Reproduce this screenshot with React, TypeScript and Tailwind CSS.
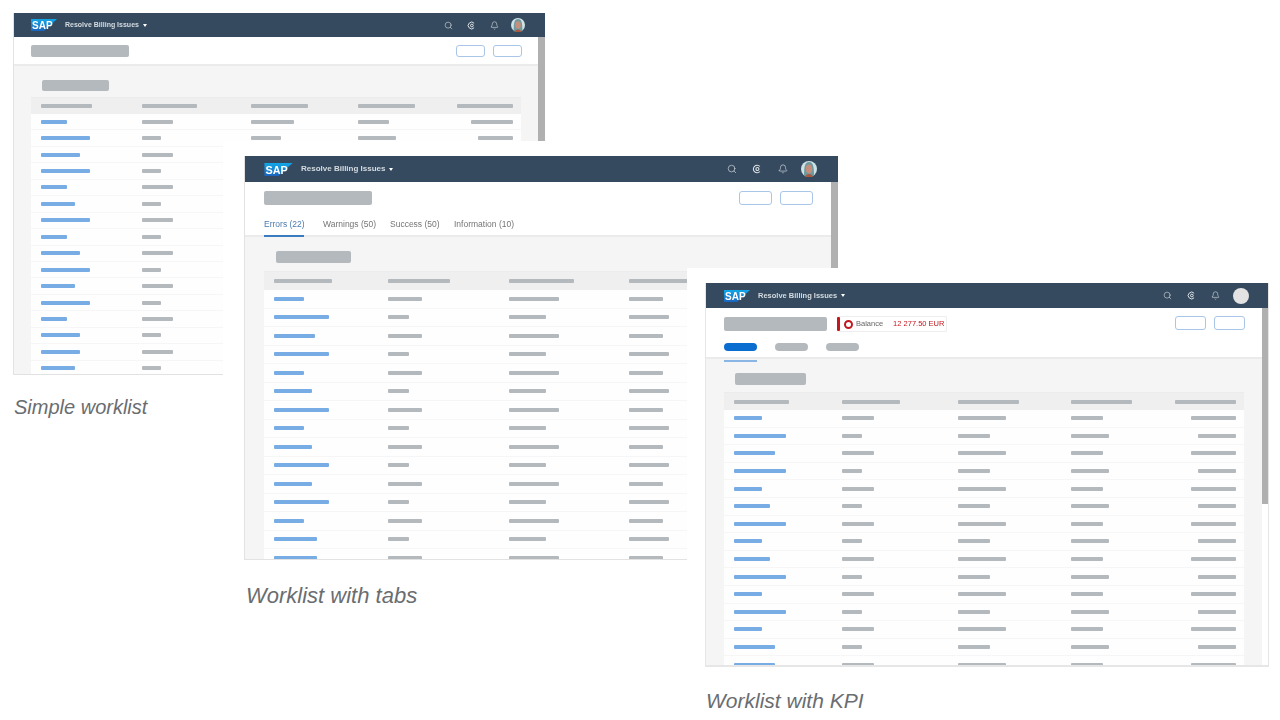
import React from "react";
import { Bell, Search } from "lucide-react";

type Cols = number[][];

const w1Rows: Cols = [
  [26, 49, 39, 49, 26, 34, 49, 26, 39, 49, 34, 49, 26, 39, 39, 34],
  [31, 19],
  [43, 30],
  [31, 38],
  [42, 35],
];
const w2Rows: Cols = [
  [30, 55, 41, 55, 30, 38, 55, 30, 38, 55, 38, 55, 30, 43, 43],
  [34, 21],
  [50, 37],
  [34, 40],
  [45, 38],
];
const w3Rows: Cols = [
  [28, 52, 41, 52, 28, 36, 52, 28, 36, 52, 28, 52, 28, 41, 41],
  [32, 20],
  [48, 32],
  [32, 38],
  [45, 38],
];

function Bar({ width, blue }: { width: number; blue?: boolean }) {
  return (
    <div
      className={blue ? "h-1 rounded-[1px] bg-[#77ade4]" : "h-1 rounded-[1px] bg-[#b4b9bd]"}
      style={{ width }}
    />
  );
}

function SapLogo({ className }: { className: string }) {
  return (
    <svg viewBox="0 0 26 12" className={className}>
      <defs>
        <linearGradient id="sap-blue" x1="0" y1="0" x2="0" y2="1">
          <stop offset="0" stopColor="#12a8e8" />
          <stop offset="1" stopColor="#1a64bd" />
        </linearGradient>
      </defs>
      <polygon points="0,0 26,0 13,12 0,12" fill="url(#sap-blue)" />
      <text x="1" y="10" fontSize="10" fontWeight="700" fill="#fff" fontFamily="Liberation Sans, sans-serif">
        SAP
      </text>
    </svg>
  );
}

function Avatar({ photo, className }: { photo: boolean; className: string }) {
  if (!photo) return <div className={`${className} rounded-full bg-[#e3e3e3]`} />;
  return (
    <svg viewBox="0 0 16 16" className={className}>
      <circle cx="8" cy="8" r="8" fill="#cfe3e6" />
      <path d="M3 15 C3 5 4 1 8 1 C12 1 13 5 13 15 Z" fill="#6f9aa0" />
      <ellipse cx="8" cy="8" rx="3.2" ry="4.4" fill="#c58f7c" />
      <path d="M4 16 C5 12 11 12 12 16 Z" fill="#a9593f" />
    </svg>
  );
}

function ShellBar({
  title,
  logo,
  height,
  text,
  pad,
  gap,
  icon,
  avatar,
  photo,
}: {
  title: string;
  logo: string;
  height: string;
  text: string;
  pad: string;
  gap: string;
  icon: string;
  avatar: string;
  photo: boolean;
}) {
  return (
    <div className={`flex shrink-0 items-center justify-between bg-[#354a5f] ${height} ${pad}`}>
      <div className="flex items-center">
        <SapLogo className={logo} />
        <span className={`ml-2 flex items-center font-semibold text-[#d5dbe0] ${text}`}>
          {title}
          <span className="ml-1 h-0 w-0 border-x-[2.5px] border-t-[3px] border-x-transparent border-t-white" />
        </span>
      </div>
      <div className={`flex items-center text-[#dfe4e8] ${gap}`}>
        <Search className={icon} strokeWidth={1.5} />
        <svg viewBox="0 0 12 12" className={icon} fill="none" stroke="currentColor" strokeWidth="1.3">
          <path d="M9.5 3 A4.5 4.5 0 1 0 9.5 9" />
          <circle cx="6.5" cy="6" r="1.8" />
        </svg>
        <Bell className={icon} strokeWidth={1.5} />
        <Avatar photo={photo} className={avatar} />
      </div>
    </div>
  );
}

function Table({
  rows,
  header,
  grid,
  headHeight,
  rowHeight,
  count,
}: {
  rows: Cols;
  header: number[];
  grid: string;
  headHeight: string;
  rowHeight: string;
  count: number;
}) {
  const cell = (col: number, i: number) => rows[col][i % rows[col].length];
  return (
    <div>
      <div className={`grid items-center border-t border-[#ececec] bg-[#efefef] pl-[10px] pr-[8px] ${grid} ${headHeight}`}>
        {header.map((w, c) => (
          <div key={c} className={c === 4 ? "flex justify-end" : ""}>
            <Bar width={w} />
          </div>
        ))}
      </div>
      {Array.from({ length: count }, (_, i) => (
        <div key={i} className={`grid items-center border-b border-[#f6f6f6] bg-[#fefefe] pl-[10px] pr-[8px] ${grid} ${rowHeight}`}>
          <Bar width={cell(0, i)} blue />
          <Bar width={cell(1, i)} />
          <Bar width={cell(2, i)} />
          <Bar width={cell(3, i)} />
          <div className="flex justify-end">
            <Bar width={cell(4, i)} />
          </div>
        </div>
      ))}
    </div>
  );
}

function Actions({ className }: { className: string }) {
  return (
    <div className="flex gap-2">
      <div className={`rounded-[3px] border-[1.5px] border-[#a9c6e8] bg-white ${className}`} />
      <div className={`rounded-[3px] border-[1.5px] border-[#a9c6e8] bg-white ${className}`} />
    </div>
  );
}

function ErrorTabs() {
  const tabs = ["Warnings (50)", "Success (50)", "Information (10)"];
  return (
    <div className="mt-[11px] flex text-[8.5px] leading-none text-[#757575]">
      <div className="mr-[19px] h-[21px] w-[40px] whitespace-nowrap border-b-2 border-[#3b7cc0] pt-[4px] text-[#4b7cb0]">Errors (22)</div>
      <div className="w-[67px] pt-[4px]">{tabs[0]}</div>
      <div className="w-[64px] pt-[4px]">{tabs[1]}</div>
      <div className="pt-[4px]">{tabs[2]}</div>
    </div>
  );
}

function PillTabs() {
  return (
    <div className="mt-[11px] flex gap-[18px]">
      <div className="h-[19px] w-[33px] border-b-2 border-[#8ab6e6]">
        <div className="h-2 rounded-full bg-[#0a6ed1]" />
      </div>
      <div className="h-2 w-[33px] rounded-full bg-[#b4b9bd]" />
      <div className="h-2 w-[33px] rounded-full bg-[#b4b9bd]" />
    </div>
  );
}

function Kpi() {
  return (
    <div className="ml-[10px] flex h-4 w-[110px] items-center rounded-[2px] border-y border-r border-[#eeeeee] bg-white">
      <div className="h-full w-[3px] rounded-[1px] bg-[#c4161c]" />
      <div className="ml-[4px] flex size-[9px] items-center justify-center rounded-full border-[2.5px] border-[#c4161c]" />
      <span className="ml-[3px] whitespace-nowrap text-[7.5px] text-[#666666]">Balance</span>
      <span className="ml-[10px] whitespace-nowrap text-[7.5px] text-[#c4161c]">12 277.50 EUR</span>
    </div>
  );
}

export default function App() {
  return (
    <div className="relative h-[720px] w-[1280px] overflow-hidden bg-white font-['Liberation_Sans',sans-serif]">
      {/* simple worklist */}
      <div className="absolute left-[13px] top-[13px]">
        <div className="flex h-[362px] w-[532px] flex-col overflow-hidden border-b border-l border-[#e2e2e2] blur-[0.4px]">
          <ShellBar
            title="Resolve Billing Issues"
            logo="h-[12px] w-[26px]"
            height="h-[24px]"
            text="text-[7px]"
            pad="pl-[17px] pr-[20px]"
            gap="gap-[14px]"
            icon="size-[9px]"
            avatar="-ml-[2px] size-[14px]"
            photo
          />
          <div className="flex min-h-0 flex-1">
            <div className="min-w-0 flex-1">
              <div className="flex h-[29px] justify-between border-b-2 border-[#ebebeb] bg-white pl-[17px] pr-[16px] pt-[8px]">
                <div className="h-3 w-[98px] rounded-[2px] bg-[#b4b9bd]" />
                <Actions className="h-3 w-[29px]" />
              </div>
              <div className="h-full bg-[#f5f5f5] pl-[17px] pr-[17px] pt-[14px]">
                <div className="mb-[6px] ml-[11px] h-[11px] w-[67px] rounded-[2px] bg-[#b4b9bd]" />
                <Table
                  rows={w1Rows}
                  header={[51, 55, 57, 57, 56]}
                  grid="grid-cols-[101px_109px_107px_1fr_1fr]"
                  headHeight="h-[17px]"
                  rowHeight="h-[16.45px]"
                  count={16}
                />
              </div>
            </div>
            <div className="w-[7px] bg-[#b0b0b0]" />
          </div>
        </div>
        <p className="mt-[21px] pl-px text-[20px] italic leading-[23px] text-[#6a6d70]">Simple worklist</p>
      </div>

      {/* tabs */}
      <div className="absolute left-[223px] top-[141px] bg-white pl-[21px] pt-[15px]">
        <div className="flex h-[404px] w-[594px] flex-col overflow-hidden border-b border-l border-[#e2e2e2] blur-[0.4px]">
          <ShellBar
            title="Resolve Billing Issues"
            logo="h-[13px] w-[29px]"
            height="h-[26px]"
            text="text-[8px]"
            pad="pl-[19px] pr-[21px]"
            gap="gap-[15.5px]"
            icon="size-[10px]"
            avatar="-ml-[2px] size-[16px]"
            photo
          />
          <div className="flex min-h-0 flex-1">
            <div className="min-w-0 flex-1">
              <div className="flex h-[55px] justify-between border-b-2 border-[#ebebeb] bg-white pl-[19px] pr-[18px] pt-[9px]">
                <div>
                  <div className="h-[14px] w-[108px] rounded-[2px] bg-[#b4b9bd]" />
                  <ErrorTabs />
                </div>
                <Actions className="h-[14px] w-[33px]" />
              </div>
              <div className="h-full bg-[#f5f5f5] pl-[19px] pr-[20px] pt-[14px]">
                <div className="mb-[8px] ml-[12px] h-3 w-[75px] rounded-[2px] bg-[#b4b9bd]" />
                <Table
                  rows={w2Rows}
                  header={[58, 62, 65, 60, 60]}
                  grid="grid-cols-[114px_121px_120px_1fr_1fr]"
                  headHeight="h-[19px]"
                  rowHeight="h-[18.5px]"
                  count={15}
                />
              </div>
            </div>
            <div className="w-[7px] bg-[#b0b0b0]" />
          </div>
        </div>
        <p className="mt-[23px] pl-[2px] text-[22px] italic leading-[25px] text-[#6a6d70]">Worklist with tabs</p>
      </div>

      {/* kpi */}
      <div className="absolute left-[687px] top-[268px] bg-white pl-[18px] pr-[11px] pt-[15px]">
        <div className="flex h-[384px] w-[564px] flex-col overflow-hidden border-b-2 border-l border-r border-[#e6e6e6] blur-[0.4px]">
          <ShellBar
            title="Resolve Billing Issues"
            logo="h-[12px] w-[26px]"
            height="h-[25px]"
            text="text-[7.5px]"
            pad="pl-[18px] pr-[19px]"
            gap="gap-[15px]"
            icon="size-[9px]"
            avatar="-ml-[2px] size-[16px]"
            photo={false}
          />
          <div className="flex min-h-0 flex-1">
            <div className="min-w-0 flex-1">
              <div className="flex h-[51px] justify-between border-b-2 border-[#ebebeb] bg-white pl-[18px] pr-[17px] pt-[8px]">
                <div>
                  <div className="flex items-center">
                    <div className="h-[14px] w-[103px] rounded-[2px] bg-[#b4b9bd]" />
                    <Kpi />
                  </div>
                  <PillTabs />
                </div>
                <Actions className="h-[14px] w-[31px]" />
              </div>
              <div className="h-full bg-[#f5f5f5] pl-[18px] pr-[18px] pt-[14px]">
                <div className="mb-[7px] ml-[11px] h-3 w-[71px] rounded-[2px] bg-[#b4b9bd]" />
                <Table
                  rows={w3Rows}
                  header={[55, 58, 61, 61, 61]}
                  grid="grid-cols-[108px_116px_113px_1fr_1fr]"
                  headHeight="h-[18px]"
                  rowHeight="h-[17.6px]"
                  count={15}
                />
              </div>
            </div>
            <div className="w-[6px] bg-white">
              <div className="h-[196px] bg-[#b0b0b0]" />
            </div>
          </div>
        </div>
        <p className="mt-[22px] pl-px text-[21px] italic leading-[23px] text-[#6a6d70]">Worklist with KPI</p>
      </div>
    </div>
  );
}
